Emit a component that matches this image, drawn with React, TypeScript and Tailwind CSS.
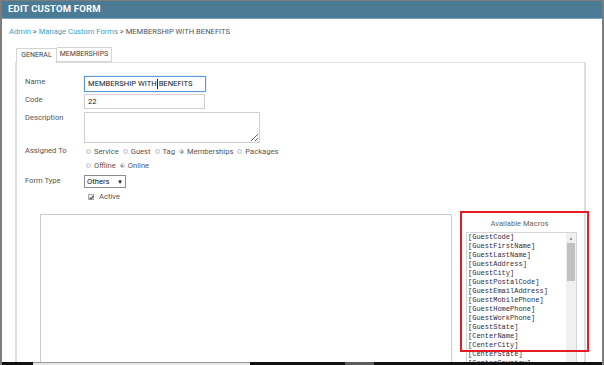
import type { ReactNode } from 'react';

const macros = [
  'GuestCode',
  'GuestFirstName',
  'GuestLastName',
  'GuestAddress',
  'GuestCity',
  'GuestPostalCode',
  'GuestEmailAddress',
  'GuestMobilePhone',
  'GuestHomePhone',
  'GuestWorkPhone',
  'GuestState',
  'CenterName',
  'CenterCity',
  'CenterState',
  'CenterCountry',
  'CenterPostalCode',
];

function Radio({ label, checked }: { label: string; checked?: boolean }) {
  return (
    <span className="flex items-center gap-[3px]">
      <span className="w-[5px] h-[5px] rounded-full border border-[#c4c4c4] bg-[#f3f3f3] grid place-items-center">
        {checked && <span className="w-[2px] h-[2px] rounded-full bg-[#777]" />}
      </span>
      <span>{label}</span>
    </span>
  );
}

function Row({ label, children, className = '' }: { label: string; children: ReactNode; className?: string }) {
  return (
    <div className={`flex items-start ${className}`}>
      <div className="w-[59px] shrink-0 leading-[12px] text-[#555]">{label}</div>
      <div className="flex-1">{children}</div>
    </div>
  );
}

export default function App() {
  return (
    <div
      className="relative w-[604px] h-[365px] overflow-hidden bg-white border-l-2 border-t border-r-2 border-[#7d7d7d] text-[7.6px]"
      style={{ fontFamily: 'Roboto, "Liberation Sans", sans-serif' }}
    >
      <div className="h-[18px] bg-[#4b7b95] border-b border-[#79a6bd] flex items-center pl-[6px] text-white font-bold text-[9.5px] tracking-[0.2px]">
        EDIT CUSTOM FORM
      </div>

      <div className="mt-[7px] ml-[7px] leading-[12px] text-[#555]">
        <span className="text-[#3ea2bb]">Admin</span> &gt;{' '}
        <span className="text-[#3ea2bb]">Manage Custom Forms</span> &gt; MEMBERSHIP WITH BENEFITS
      </div>

      <div className="mt-[9px] ml-[14px] flex text-[7px] text-[#444] leading-[13px]">
        <div className="w-[41px] text-center border border-b-0 border-[#d4d4d4] bg-white relative top-px">GENERAL</div>
        <div className="w-[55px] text-center border border-l-0 border-[#d4d4d4] bg-white">MEMBERSHIPS</div>
      </div>

      <div className="ml-[13px] w-[571px] h-[320px] border-l-2 border-t border-r-2 border-[#dedede] pl-[8px] pt-[13px]">
        <Row label="Name">
          <div className="w-[122px] h-[16px] border border-[#5b9ad6] shadow-[0_0_1px_#7fb3e6] flex items-center pl-[3px] text-[#222]">
            MEMBERSHIP WITH <span className="w-px h-[10px] bg-[#222] mx-[0.5px]" />BENEFITS
          </div>
        </Row>
        <Row label="Code" className="mt-[2px]">
          <div className="w-[121px] h-[15px] border border-[#cfcfcf] flex items-center pl-[3px] text-[#222]">22</div>
        </Row>
        <Row label="Description" className="mt-[3px]">
          <textarea
            readOnly
            className="block w-[176px] h-[31px] border border-[#cfcfcf] outline-none"
          />
        </Row>
        <Row label="Assigned To" className="mt-[2px]">
          <div className="text-[#555] pl-[2px]">
            <div className="h-[14px] flex items-center gap-[4px]">
              <Radio label="Service" />
              <Radio label="Guest" />
              <Radio label="Tag" />
              <Radio label="Memberships" checked />
              <Radio label="Packages" />
            </div>
            <div className="h-[14px] flex items-center gap-[4px]">
              <Radio label="Offline" />
              <Radio label="Online" checked />
            </div>
          </div>
        </Row>
        <Row label="Form Type" className="mt-[2px]">
          <div className="w-[42px] h-[13px] border border-[#8a8a8a] flex items-center justify-between px-[2px] text-[#111]">
            <span>Others</span>
            <span className="text-[6px]">▼</span>
          </div>
        </Row>
        <div className="mt-[3px] ml-[63px] h-[12px] flex items-center gap-[5px] text-[#555]">
          <span className="w-[6px] h-[6px] border border-[#aaa] bg-[#eee] grid place-items-center">
            <svg width="5" height="5" viewBox="0 0 5 5">
              <path d="M0.6 2.6 L2 4 L4.5 0.8" stroke="#444" strokeWidth="1.1" fill="none" />
            </svg>
          </span>
          Active
        </div>

        <div className="flex items-start">
          <div className="mt-[11px] ml-[15px] w-[412px] h-[200px] border border-[#cccccc]" />
          <div className="relative mt-[16px] ml-[14px] w-[111px]">
            <div className="text-center text-[#666] leading-[10px] pr-[4px]">Available Macros</div>
            <div className="mt-[3px] h-[150px] border border-[#d6d6d6] flex">
              <div
                className="flex-1 pl-[1px] text-[7px] leading-[9px] text-[#2d2d44]"
                style={{ fontFamily: '"Liberation Mono", monospace' }}
              >
                {macros.map((m) => (
                  <div key={m}>[{m}]</div>
                ))}
              </div>
              <div className="w-[10px] bg-[#f0f0f0] flex flex-col items-center">
                <span className="mt-[3px] text-[5px] leading-[5px] text-[#999]">▲</span>
                <div className="mt-[2px] w-[8px] h-[38px] bg-[#c1c1c1]" />
              </div>
            </div>
            <div className="absolute left-[-6px] top-[-8px] w-[129px] h-[141px] border-2 border-[#e51c23] pointer-events-none" />
          </div>
        </div>
      </div>

      <div className="absolute left-0 right-0 bottom-0 h-[3px] bg-[#111] flex">
        <div className="ml-[31px] w-[217px] bg-[#e6e6e6] border-t border-[#999]" />
        <div className="ml-[95px] w-[29px] bg-[#5c5c5c]" />
      </div>
    </div>
  );
}
